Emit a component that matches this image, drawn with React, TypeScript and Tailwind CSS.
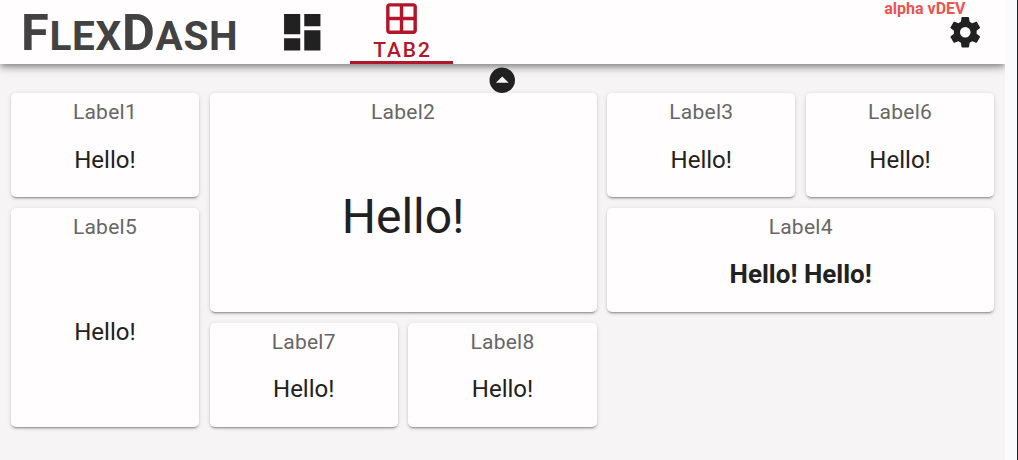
import type { ReactNode } from 'react';

const ICONS = {
  dashboard: 'M13,3V9H21V3M13,21H21V11H13M3,21H11V15H3M3,13H11V3H3V13Z',
  grid: 'M19,3H5C3.9,3 3,3.9 3,5V19C3,20.1 3.9,21 5,21H19C20.1,21 21,20.1 21,19V5C21,3.9 20.1,3 19,3M19,11H13V5H19V11M11,5V11H5V5H11M5,13H11V19H5V13M13,19V13H19V19H13Z',
  up: 'M12,2A10,10 0 0,1 22,12A10,10 0 0,1 12,22A10,10 0 0,1 2,12A10,10 0 0,1 12,2M17,14L12,9L7,14H17Z',
  cog: 'M12,15.5A3.5,3.5 0 0,1 8.5,12A3.5,3.5 0 0,1 12,8.5A3.5,3.5 0 0,1 15.5,12A3.5,3.5 0 0,1 12,15.5M19.43,12.97C19.47,12.65 19.5,12.33 19.5,12C19.5,11.67 19.47,11.34 19.43,11L21.54,9.37C21.73,9.22 21.78,8.95 21.66,8.73L19.66,5.27C19.54,5.05 19.27,4.96 19.05,5.05L16.56,6.05C16.04,5.66 15.5,5.32 14.87,5.07L14.5,2.42C14.46,2.18 14.25,2 14,2H10C9.75,2 9.54,2.18 9.5,2.42L9.13,5.07C8.5,5.32 7.96,5.66 7.44,6.05L4.95,5.05C4.73,4.96 4.46,5.05 4.34,5.27L2.34,8.73C2.21,8.95 2.27,9.22 2.46,9.37L4.57,11C4.53,11.34 4.5,11.67 4.5,12C4.5,12.33 4.53,12.65 4.57,12.97L2.46,14.63C2.27,14.78 2.21,15.05 2.34,15.27L4.34,18.73C4.46,18.95 4.73,19.03 4.95,18.95L7.44,17.94C7.96,18.34 8.5,18.68 9.13,18.93L9.5,21.58C9.54,21.82 9.75,22 10,22H14C14.25,22 14.46,21.82 14.5,21.58L14.87,18.93C15.5,18.67 16.04,18.34 16.56,17.94L19.05,18.95C19.27,19.03 19.54,18.95 19.66,18.73L21.66,15.27C21.78,15.05 21.73,14.78 21.54,14.63L19.43,12.97Z',
};

function Icon({ d, className }: { d: string; className: string }) {
  return (
    <svg viewBox="0 0 24 24" fill="currentColor" className={className}>
      <path d={d} />
    </svg>
  );
}

function Card({ label, className = '', children }: { label: string; className?: string; children: ReactNode }) {
  return (
    <section
      className={`flex flex-col rounded-[5px] bg-[#fffdfe] shadow-[0_3px_1px_-2px_rgba(0,0,0,.2),0_2px_2px_0_rgba(0,0,0,.14),0_1px_5px_0_rgba(0,0,0,.12)] ${className}`}
    >
      <h2 className="h-[37px] pt-1 text-center text-[21px] leading-[30px] tracking-[0.25px] text-[#666]">{label}</h2>
      <div className="flex flex-1 items-center justify-center pb-[7px]">{children}</div>
    </section>
  );
}

function Small({ className = '' }: { className?: string }) {
  return <span className={`text-2xl leading-8 ${className}`}>Hello!</span>;
}

export default function App() {
  return (
    <div className="flex h-[460px] w-[1018px] overflow-hidden bg-[#fcfbfc] font-['Roboto',sans-serif] text-[#212121]">
      <div className="w-[1005px] shrink-0 overflow-hidden bg-[#f6f4f5]">
        <header className="relative flex h-16 bg-[#fffdfe] shadow-[0_3px_5px_-1px_rgba(0,0,0,.25),0_5px_7px_0_rgba(0,0,0,.16),0_1px_13px_0_rgba(0,0,0,.14)]">
          <h1 className="w-[252px] pl-[21px] pt-[3px] text-[50.5px] leading-[60px] font-bold tracking-[0.7px] whitespace-nowrap text-[#424242]">
            F<span className="text-[40.5px]">LEX</span>D<span className="text-[40.5px]">ASH</span>
          </h1>
          <nav className="flex">
            <button className="flex w-[98px] items-center pl-[25.7px]" aria-label="Dashboard">
              <Icon d={ICONS.dashboard} className="size-[48.5px] shrink-0" />
            </button>
            <button className="flex w-[103px] flex-col items-center border-b-3 border-[#b2162a] text-[#b2162a]">
              <Icon d={ICONS.grid} className="-mt-[2px] size-[41px] shrink-0" />
              <span className="pl-[2px] text-[21px] leading-[22px] font-medium tracking-[1.88px]">TAB2</span>
            </button>
          </nav>
          <button className="absolute top-[14px] left-[946.5px]" aria-label="Settings">
            <Icon d={ICONS.cog} className="size-[36.5px]" />
          </button>
          <span className="absolute top-0 right-[39.5px] text-base leading-[18px] font-bold text-[#ef5350]">alpha vDEV</span>
          <button className="absolute top-[65px] left-[487.2px]" aria-label="Collapse">
            <Icon d={ICONS.up} className="size-[30.5px]" />
          </button>
        </header>
        <main className="grid auto-rows-[104px] grid-cols-5 gap-x-[10.5px] gap-y-[11px] pr-[10.8px] pl-[10.8px] pt-[29px]">
          <Card label="Label1"><Small /></Card>
          <Card label="Label2" className="col-span-2 row-span-2"><span className="pb-px text-5xl">Hello!</span></Card>
          <Card label="Label3"><Small /></Card>
          <Card label="Label6"><Small /></Card>
          <Card label="Label5" className="row-span-2"><Small className="pb-[2px]" /></Card>
          <Card label="Label4" className="col-span-2"><span className="pb-[3px] text-[26px] leading-8 font-bold">Hello! Hello!</span></Card>
          <Card label="Label7"><Small className="pb-[2px]" /></Card>
          <Card label="Label8"><Small className="pb-[2px]" /></Card>
        </main>
      </div>
      <div className="ml-auto w-px bg-[#202124]" />
    </div>
  );
}
